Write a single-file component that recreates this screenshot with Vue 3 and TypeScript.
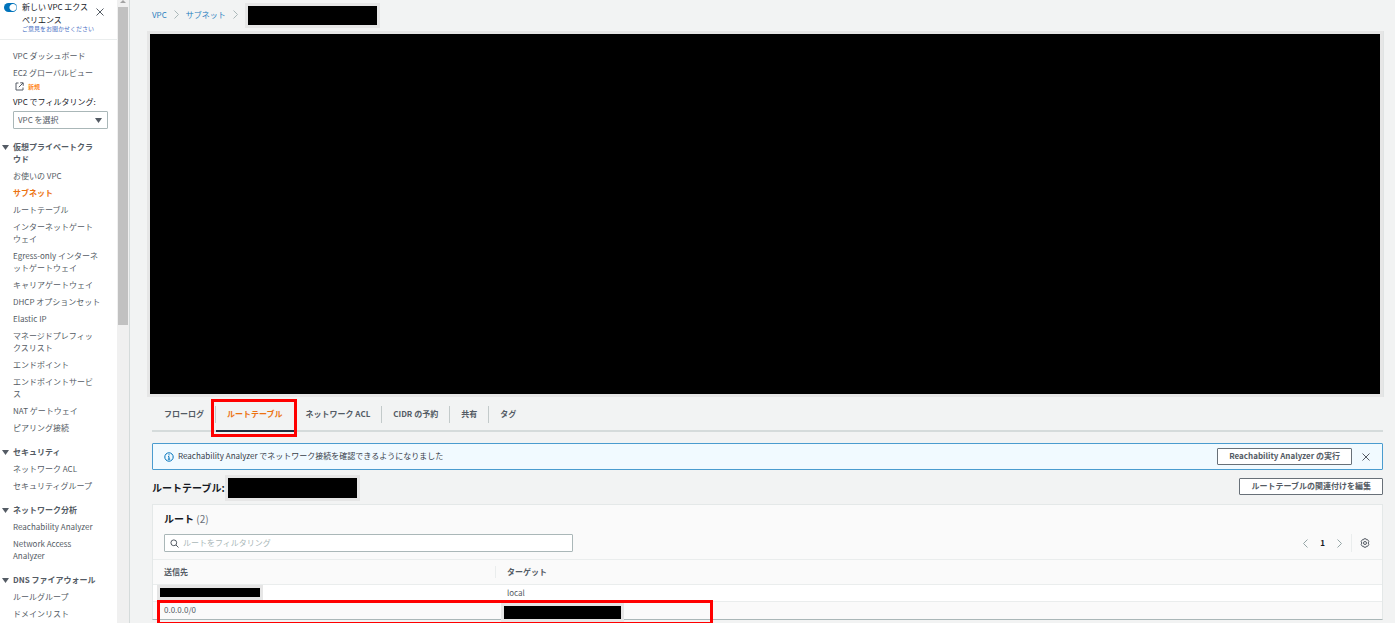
<script setup lang="ts">
import { ref } from 'vue'

interface NavItem {
  label: string
  active?: boolean
  oneLine?: boolean
}

interface NavSection {
  title: string
  items: NavItem[]
}

const sections: NavSection[] = [
  {
    title: '仮想プライベートクラウド',
    items: [
      { label: 'お使いの VPC' },
      { label: 'サブネット', active: true },
      { label: 'ルートテーブル' },
      { label: 'インターネットゲートウェイ' },
      { label: 'Egress-only インターネットゲートウェイ' },
      { label: 'キャリアゲートウェイ' },
      { label: 'DHCP オプションセット', oneLine: true },
      { label: 'Elastic IP' },
      { label: 'マネージドプレフィックスリスト' },
      { label: 'エンドポイント' },
      { label: 'エンドポイントサービス' },
      { label: 'NAT ゲートウェイ' },
      { label: 'ピアリング接続' },
    ],
  },
  {
    title: 'セキュリティ',
    items: [{ label: 'ネットワーク ACL' }, { label: 'セキュリティグループ' }],
  },
  {
    title: 'ネットワーク分析',
    items: [{ label: 'Reachability Analyzer' }, { label: 'Network Access Analyzer' }],
  },
  {
    title: 'DNS ファイアウォール',
    items: [{ label: 'ルールグループ' }, { label: 'ドメインリスト' }],
  },
]

const tabs: string[] = ['フローログ', 'ルートテーブル', 'ネットワーク ACL', 'CIDR の予約', '共有', 'タグ']
const activeTab = ref('ルートテーブル')
const newExperience = ref(true)
const filterText = ref('')
</script>

<template>
  <div class="shell">
    <aside class="sidebar">
      <div class="experience">
        <input id="experience" v-model="newExperience" class="toggle" type="checkbox" role="switch" />
        <div class="experience-text">
          <label for="experience">新しい VPC エクスペリエンス</label>
          <a class="feedback" href="#">ご意見をお聞かせください</a>
        </div>
        <button class="icon-button" type="button" aria-label="閉じる">
          <svg width="8" height="8" viewBox="0 0 8 8"><path d="M.5.5l7 7M7.5.5l-7 7" /></svg>
        </button>
      </div>

      <nav class="nav">
        <ul class="links">
          <li><a href="#">VPC ダッシュボード</a></li>
          <li>
            <a href="#">EC2 グローバルビュー</a>
            <span class="external">
              <svg width="9" height="9" viewBox="0 0 9 9">
                <path d="M3.5 1H1v7h7V5.5M5.2.8h3v3M8 1L3.8 5.2" />
              </svg>
              <span class="new">新規</span>
            </span>
          </li>
        </ul>
        <label class="filter-label" for="vpc-filter">VPC でフィルタリング:</label>
        <div class="select-wrap">
          <select id="vpc-filter" class="vpc-select">
            <option>VPC を選択</option>
          </select>
          <span class="caret select-caret"></span>
        </div>

        <section v-for="section in sections" :key="section.title" class="section">
          <h3><span class="caret"></span>{{ section.title }}</h3>
          <ul class="links">
            <li v-for="item in section.items" :key="item.label">
              <a href="#" :class="{ current: item.active, 'one-line': item.oneLine }">{{ item.label }}</a>
            </li>
          </ul>
        </section>
      </nav>
    </aside>

    <div class="scrollbar">
      <span class="scroll-up"></span>
      <div class="thumb"></div>
    </div>

    <main class="main">
      <nav class="breadcrumb">
        <a href="#">VPC</a>
        <svg width="5" height="9" viewBox="0 0 5 9"><path d="M.5.5l4 4-4 4" /></svg>
        <a href="#">サブネット</a>
        <svg width="5" height="9" viewBox="0 0 5 9"><path d="M.5.5l4 4-4 4" /></svg>
        <span class="mask crumb-mask"></span>
      </nav>

      <div class="mask detail-mask"></div>

      <div class="content">
        <div class="tabs" role="tablist">
          <div v-for="tab in tabs" :key="tab" class="tab-cell">
            <button
              type="button"
              role="tab"
              class="tab"
              :class="{ selected: tab === activeTab }"
              :aria-selected="tab === activeTab"
              @click="activeTab = tab"
            >
              {{ tab }}
            </button>
            <span v-if="tab === 'ルートテーブル'" class="mark tab-mark"></span>
          </div>
        </div>

        <div class="alert">
          <svg class="info" width="10" height="10" viewBox="0 0 10 10">
            <circle cx="5" cy="5" r="4.2" />
            <path d="M5 2.2v1.2M4 4.6h1v2.6M3.8 7.2h2.4" />
          </svg>
          <span class="alert-text">Reachability Analyzer でネットワーク接続を確認できるようになりました</span>
          <button class="button" type="button">Reachability Analyzer の実行</button>
          <button class="icon-button alert-close" type="button" aria-label="閉じる">
            <svg width="8" height="8" viewBox="0 0 8 8"><path d="M.5.5l7 7M7.5.5l-7 7" /></svg>
          </button>
        </div>

        <div class="title-row">
          <h2>ルートテーブル:</h2>
          <span class="mask title-mask"></span>
          <button class="button edit" type="button">ルートテーブルの関連付けを編集</button>
        </div>

        <section class="panel">
          <h2 class="panel-title">ルート <span>(2)</span></h2>
          <div class="tools">
            <div class="search">
              <svg width="9" height="9" viewBox="0 0 9 9">
                <circle cx="3.8" cy="3.8" r="2.9" />
                <path d="M6 6l2.5 2.5" />
              </svg>
              <input v-model="filterText" type="text" aria-label="ルートをフィルタリング" placeholder="ルートをフィルタリング" />
            </div>
            <div class="pager">
              <button type="button" aria-label="前のページ">
                <svg width="5" height="9" viewBox="0 0 5 9"><path d="M4.5.5l-4 4 4 4" /></svg>
              </button>
              <button class="page" type="button">1</button>
              <button type="button" aria-label="次のページ">
                <svg width="5" height="9" viewBox="0 0 5 9"><path d="M.5.5l4 4-4 4" /></svg>
              </button>
              <button class="settings" type="button" aria-label="設定">
                <svg width="10" height="10" viewBox="0 0 10 10">
                  <path d="M3.9.8h2.2l.4 1 1.2-.1 1.1 1.8-.6 1.5.6 1.5-1.1 1.8-1.2-.1-.4 1H3.9l-.4-1-1.2.1-1.1-1.8L1.8 5l-.6-1.5 1.1-1.8 1.2.1z" />
                  <circle cx="5" cy="5" r="1.5" />
                </svg>
              </button>
            </div>
          </div>
          <table>
            <thead>
              <tr><th class="dest"><div>送信先</div></th><th>ターゲット</th></tr>
            </thead>
            <tbody>
              <tr><td><span class="mask dest-mask"></span></td><td>local</td></tr>
              <tr><td>0.0.0.0/0</td><td><span class="mask target-mask"></span></td></tr>
            </tbody>
          </table>
          <span class="mark row-mark"></span>
        </section>
      </div>
    </main>
  </div>
</template>

<style>
body {
  background: #fff;
}
</style>

<style scoped>
* {
  box-sizing: border-box;
}

.shell {
  display: flex;
  font-family: 'Noto Sans CJK JP', 'Noto Sans', sans-serif;
  font-size: 8px;
  line-height: 12px;
  color: #545b64;
}

a {
  color: inherit;
  text-decoration: none;
}

button,
input,
select {
  font: inherit;
  color: inherit;
  margin: 0;
  padding: 0;
}

button {
  border: 0;
  background: none;
}

svg {
  display: block;
  fill: none;
  stroke: #545b64;
  flex: none;
}

h2,
h3,
ul {
  margin: 0;
  padding: 0;
}

ul {
  list-style: none;
}

.mask {
  display: block;
  background: #000;
  border: 3px solid #e6e6e6;
  flex: none;
}

.mark {
  position: absolute;
  border: 3px solid #f00;
  pointer-events: none;
  z-index: 2;
}

.sidebar {
  width: 117px;
  flex: none;
  background: #fff;
}

.experience {
  display: flex;
  align-items: flex-start;
  height: 40px;
  border-bottom: 1px solid #eaeded;
  padding-left: 4px;
}

.toggle {
  appearance: none;
  flex: none;
  width: 13px;
  height: 9px;
  margin: 3px 5px 0 0;
  border-radius: 5px;
  background: radial-gradient(circle at 9px 50%, #fff 3px, #0073bb 4px);
}

.experience-text {
  width: 70px;
  flex: none;
  color: #16191f;
}

.experience-text label {
  display: block;
  line-height: 13px;
}

.feedback {
  display: block;
  font-size: 6px;
  line-height: 6px;
  white-space: nowrap;
  color: #4a6fc4;
}

.icon-button {
  padding: 8px 0 0 4px;
}

.nav {
  padding: 10px 9px 3px 13px;
}

.links {
  display: grid;
  gap: 5px;
}

.links a {
  display: block;
  width: 87px;
}

.links a.current {
  color: #ec7211;
  font-weight: 700;
}

.links a.one-line {
  white-space: nowrap;
}

.external {
  display: flex;
  align-items: center;
  gap: 4px;
  padding: 1px 0 0 2px;
  height: 14px;
}

.new {
  font-size: 6px;
  line-height: 8px;
  font-weight: 700;
  color: #ff8a1f;
}

.filter-label {
  display: block;
  margin: 3px 0;
  color: #16191f;
}

.select-wrap {
  position: relative;
}

.vpc-select {
  appearance: none;
  display: block;
  width: 100%;
  height: 18px;
  border: 1px solid #aab7b8;
  border-radius: 1px;
  background: #fff;
  padding-left: 4px;
}

.caret {
  width: 7px;
  height: 5px;
  background: #545b64;
  clip-path: polygon(0 0, 100% 0, 50% 100%);
}

.select-caret {
  position: absolute;
  right: 6px;
  top: 7px;
}

.section {
  margin-top: 12px;
}

.section h3 {
  position: relative;
  width: 87px;
  font-size: 8px;
  font-weight: 700;
  line-height: 12px;
  margin-bottom: 5px;
}

.section h3 .caret {
  position: absolute;
  left: -11px;
  top: 4px;
}

.scrollbar {
  width: 12px;
  flex: none;
  background: #f0f0f0;
  padding: 0 1px;
}

.scroll-up {
  display: block;
  width: 6px;
  height: 3px;
  margin: 0 2px 4px;
  background: #a3a3a3;
  clip-path: polygon(50% 0, 100% 100%, 0 100%);
}

.thumb {
  height: 318px;
  background: #c1c1c1;
}

.main {
  flex: 1;
  min-width: 0;
  background: #f2f3f3;
  border-left: 1px solid #d5dbdb;
  padding: 3px 12px 3px 17px;
}

.breadcrumb {
  display: flex;
  align-items: center;
  gap: 7px;
  padding-left: 5px;
  color: #2a7fc0;
}

.breadcrumb a,
.breadcrumb svg {
  margin-bottom: 2px;
}

.breadcrumb svg {
  stroke: #aab7b8;
}

.crumb-mask {
  width: 135px;
  height: 25px;
}

.detail-mask {
  height: 366px;
  margin-top: 3px;
  box-shadow: 1px 0 0 #e0e3e3;
}

.content {
  padding-left: 5px;
}

.tabs {
  display: flex;
  margin-top: 2px;
  height: 33px;
  padding-left: 1px;
  box-shadow: inset 0 -2px #d5dbdb;
}

.tab-cell {
  position: relative;
  display: flex;
  align-items: center;
  height: 31px;
}

.tab-cell:not(:last-child)::after {
  content: '';
  width: 1px;
  height: 17px;
  background: #c3caca;
}

.tab {
  align-self: flex-start;
  height: 33px;
  padding: 0 11px 3px;
  border: 0;
  font-weight: 700;
  white-space: nowrap;
}

.tab.selected {
  color: #ec7211;
  box-shadow: inset 0 -2px #232f3e;
}

.tab-mark {
  left: -5px;
  right: -2px;
  top: 0;
  height: 38px;
}

.alert {
  display: flex;
  align-items: center;
  height: 27px;
  margin-top: 11px;
  border: 1px solid #4a9ccf;
  border-radius: 1px;
  background: #f1faff;
  padding: 0 12px 0 11px;
}

.info {
  stroke: #0073bb;
}

.alert-text {
  flex: 1;
  padding: 0 0 2px 4px;
  color: #37404a;
}

.button {
  height: 17px;
  padding: 0 11px 1px;
  border: 1px solid #687078;
  border-radius: 1px;
  background: #fff;
  color: #545b64;
  font-weight: 700;
  line-height: 12px;
  white-space: nowrap;
}

.alert-close {
  padding: 0 0 0 10px;
}

.title-row {
  display: flex;
  align-items: center;
  margin-top: 5px;
  height: 26px;
}

h2 {
  font-size: 10px;
  line-height: 14px;
  color: #16191f;
  font-weight: 700;
}

.title-row h2 {
  width: 73px;
  white-space: nowrap;
}

.title-mask {
  width: 135px;
  height: 26px;
}

.edit {
  margin-left: auto;
  align-self: flex-start;
  margin-top: 3px;
}

.panel {
  position: relative;
  margin-top: 3px;
  background: #fafafa;
  border: 1px solid #e4e8e8;
  border-bottom-color: #aab7b8;
}

.panel-title {
  padding: 7px 11px 0;
}

.panel-title span {
  font-weight: 400;
  color: #687078;
}

.tools {
  display: flex;
  align-items: center;
  justify-content: space-between;
  padding: 8px 12px 7px 11px;
}

.search {
  display: flex;
  align-items: center;
  gap: 4px;
  width: 409px;
  height: 18px;
  border: 1px solid #aab7b8;
  border-radius: 1px;
  background: #fff;
  padding-left: 5px;
}

.search input {
  flex: 1;
  border: 0;
  outline: 0;
  background: transparent;
}

.search input::placeholder {
  color: #aab7b8;
  opacity: 1;
}

.pager {
  display: flex;
  align-items: center;
  gap: 12px;
}

.pager svg {
  stroke: #95a5a6;
}

.page {
  font-weight: 700;
  color: #16191f;
}

.settings {
  border-left: 1px solid #eaeded;
  padding: 4px 0 4px 8px;
  margin-left: -3px;
}

.pager .settings svg {
  stroke: #545b64;
}

table {
  width: 100%;
  table-layout: fixed;
  border-collapse: collapse;
}

th,
td {
  position: relative;
  padding: 0 11px;
  text-align: left;
  border-top: 1px solid #eaeded;
}

th {
  height: 25px;
  font-weight: 700;
}

th.dest {
  width: 343px;
  padding-right: 0;
}

th.dest div {
  border-right: 1px solid #eaeded;
}

td {
  height: 17px;
}

tbody tr:first-child {
  background: #fff;
}

.dest-mask,
.target-mask {
  position: absolute;
  top: 0;
  left: 4px;
  width: 106px;
  height: 15px;
}

.target-mask {
  left: 5px;
  width: 123px;
  height: 19px;
  top: 1px;
}

.row-mark {
  left: 4px;
  top: 95px;
  width: 556px;
  max-width: 100%;
  height: 25px;
}
</style>
